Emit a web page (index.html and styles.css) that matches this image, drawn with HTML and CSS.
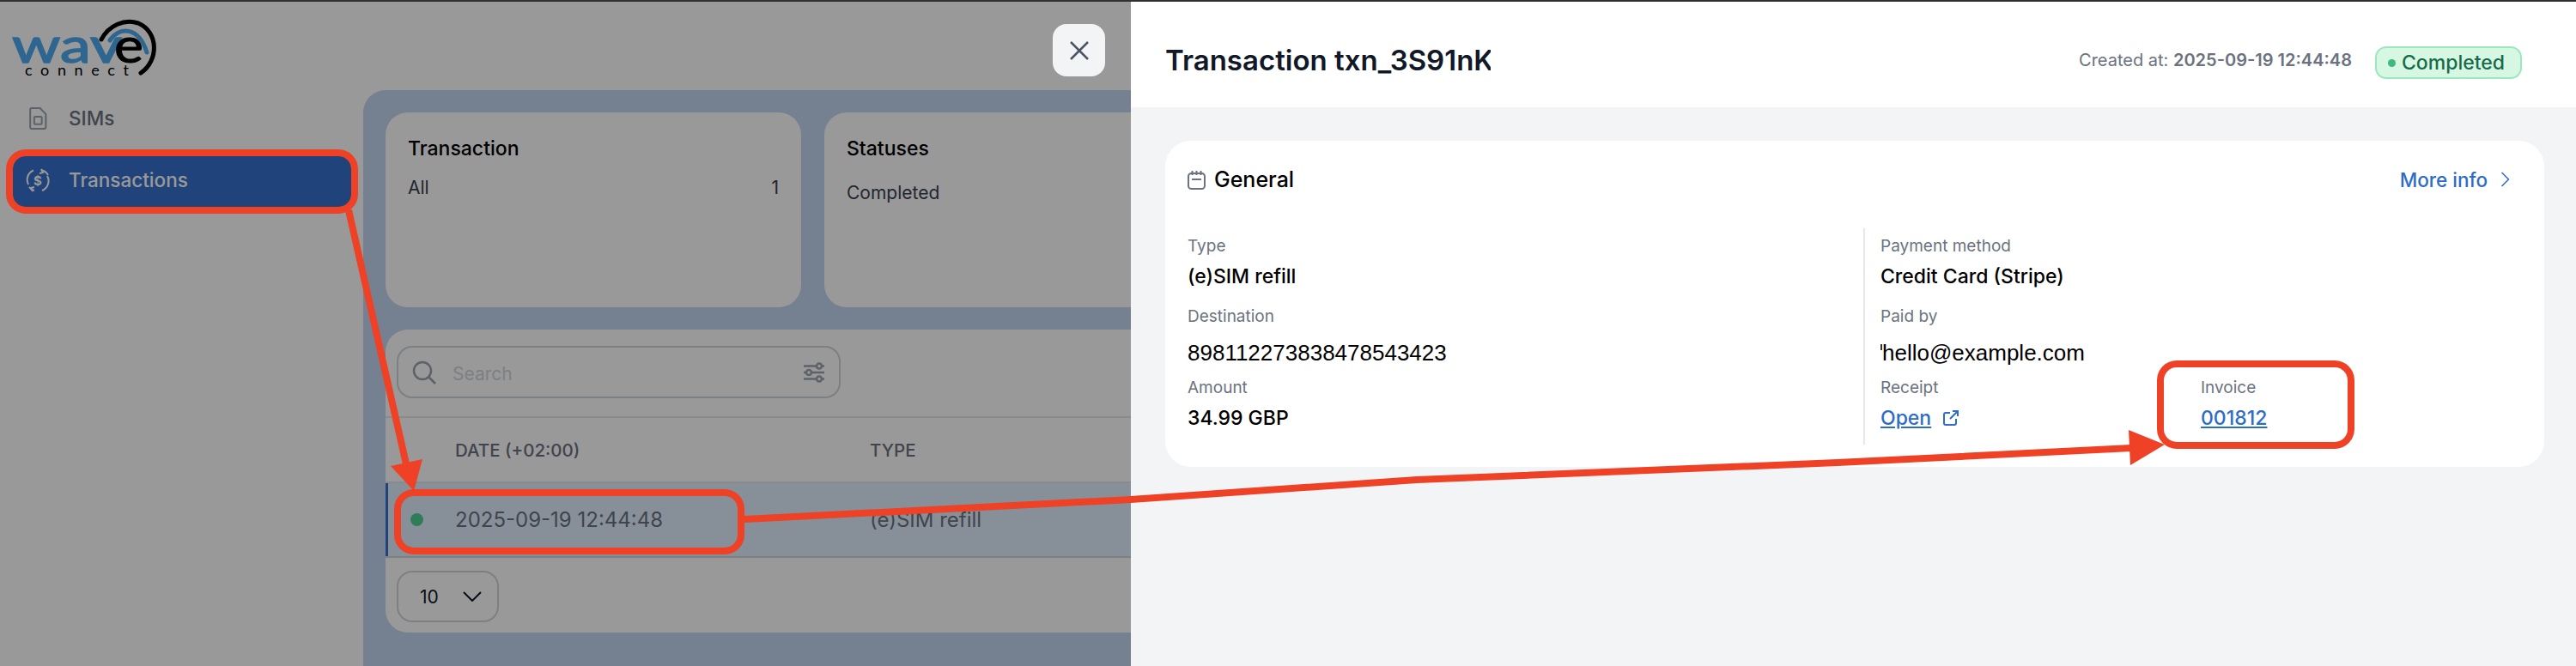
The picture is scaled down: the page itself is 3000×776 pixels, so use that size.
FILE: index.html
```html
<!DOCTYPE html>
<html lang="en">
<head>
    <meta charset="UTF-8">
    <meta name="viewport" content="width=device-width, initial-scale=1.0">
    <title>Transactions</title>
    <link rel="stylesheet" href="styles.css">
</head>
<body>
    <div class="topline"></div>

    <div class="app">
        <aside class="sidebar">
            <svg class="logo" viewBox="0 0 170 68" width="170" height="68">
                <text class="logo-wave" x="-1" y="50" textLength="128" lengthAdjust="spacingAndGlyphs">wav</text>
                <text class="logo-e" x="118" y="50" textLength="34" lengthAdjust="spacingAndGlyphs">e</text>
                <path class="logo-arc-blue" d="M113 24 C124 8 146 7 156 38"/>
                <path class="logo-arc-black" d="M103 23 C112 6 130 -1 146 4 C170 14 170 48 149 62"/>
                <text class="logo-connect" x="14" y="65" textLength="121">connect</text>
            </svg>

            <nav class="nav">
                <a class="nav-item">
                    <svg class="nav-icon" viewBox="0 0 27 27">
                        <path d="M5 3.500a1.500 1.500 0 0 1 1.500-1.500h9.500l6.500 6.500v15a1.500 1.500 0 0 1-1.500 1.500h-14.500a1.500 1.500 0 0 1-1.500-1.500z"/>
                        <rect x="9.500" y="11.500" width="8.500" height="8.500" rx="1"/>
                    </svg>
                    SIMs
                </a>
                <a class="nav-item active">
                    <svg class="nav-icon" viewBox="0 0 28 28">
                        <path d="M3 19a12 12 0 0 1 6-16.500"/>
                        <path d="M18 2a12 12 0 0 1 8 6"/>
                        <path d="M25 9a12 12 0 0 1-6 17"/>
                        <path d="M10 26a12 12 0 0 1-6-4"/>
                        <path d="M18 1l2 4-4 1M8 27l-2-4 4-1"/>
                        <text class="nav-icon-dollar" x="14" y="19.500">$</text>
                    </svg>
                    Transactions
                </a>
            </nav>
        </aside>

        <main class="main">
            <section class="stats">
                <div class="stat-card">
                    <h3>Transaction</h3>
                    <div class="stat-row"><span>All</span><span>1</span></div>
                </div>
                <div class="stat-card">
                    <h3>Statuses</h3>
                    <div class="stat-row stat-row-low"><span>Completed</span></div>
                </div>
            </section>

            <section class="table-card">
                <div class="toolbar">
                    <div class="search">
                        <svg class="search-icon" viewBox="0 0 28 28">
                            <circle cx="12" cy="12" r="10"/>
                            <path d="M19.500 19.500l7.500 7.500"/>
                        </svg>
                        <span class="search-text">Search</span>
                        <svg class="filter-icon" viewBox="0 0 26 24">
                            <path d="M1 4.500h15M22 4.500h3M1 12h3M10 12h15M1 19.500h15M22 19.500h3"/>
                            <circle cx="19" cy="4.500" r="3"/>
                            <circle cx="7" cy="12" r="3"/>
                            <circle cx="19" cy="19.500" r="3"/>
                        </svg>
                    </div>
                </div>

                <div class="table-row table-head">
                    <span></span>
                    <span>Date (+02:00)</span>
                    <span>Type</span>
                </div>
                <div class="table-row table-item">
                    <span class="dot"></span>
                    <span>2025-09-19 12:44:48</span>
                    <span>(e)SIM refill</span>
                </div>

                <div class="table-foot">
                    <div class="page-size">
                        10
                        <svg class="page-size-icon" viewBox="0 0 22 12">
                            <path d="M1 1l10 10 10-10"/>
                        </svg>
                    </div>
                </div>
            </section>
        </main>

        <div class="scrim"></div>

        <button class="close-btn">
            <svg viewBox="0 0 22 22">
                <path d="M1 1l20 20M21 1l-20 20"/>
            </svg>
        </button>

        <section class="drawer">
            <header class="drawer-head">
                <h1 class="drawer-title">Transaction txn_3S91nK6xTq2mPz8Lw4Ab</h1>
                <div class="created">Created at: <b>2025-09-19 12:44:48</b></div>
                <div class="badge"><span class="badge-dot"></span>Completed</div>
            </header>

            <div class="drawer-body">
                <div class="detail-card">
                    <div class="detail-head">
                        <h2>
                            <svg class="calendar-icon" viewBox="0 0 21 23">
                                <rect x="1" y="4" width="19" height="18" rx="3.500"/>
                                <path d="M5.500 1v5M10.500 1v5M15.500 1v5M5 11h11"/>
                            </svg>
                            General
                        </h2>
                        <a class="more-link">
                            More info
                            <svg viewBox="0 0 11 18"><path d="M1.500 1l8 8-8 8"/></svg>
                        </a>
                    </div>

                    <div class="detail-grid">
                        <div class="fields">
                            <div class="field">
                                <span class="field-label">Type</span>
                                <span class="field-value">(e)SIM refill</span>
                            </div>
                            <div class="field field-loose">
                                <span class="field-label">Destination</span>
                                <span class="field-plain">898112273838478543423</span>
                            </div>
                            <div class="field">
                                <span class="field-label">Amount</span>
                                <span class="field-value">34.99 GBP</span>
                            </div>
                        </div>
                        <div class="fields fields-right">
                            <div class="field">
                                <span class="field-label">Payment method</span>
                                <span class="field-value">Credit Card (Stripe)</span>
                            </div>
                            <div class="field field-loose">
                                <span class="field-label">Paid by</span>
                                <span class="field-plain field-email">hello@example.com</span>
                            </div>
                            <div class="field-pair">
                                <div class="field field-receipt">
                                    <span class="field-label">Receipt</span>
                                    <span class="field-value">
                                        <a class="link">Open</a>
                                        <svg class="external-icon" viewBox="0 0 18 18">
                                            <path d="M8 3h-5a2 2 0 0 0-2 2v10a2 2 0 0 0 2 2h10a2 2 0 0 0 2-2v-5"/>
                                            <path d="M8 10l9-9M11 1h6v6"/>
                                        </svg>
                                    </span>
                                </div>
                                <div class="field">
                                    <span class="field-label">Invoice</span>
                                    <span class="field-value"><a class="link">001812</a></span>
                                </div>
                            </div>
                        </div>
                    </div>
                </div>
            </div>
        </section>

        <!-- annotations drawn on top of the screenshot -->
        <svg class="notes" viewBox="0 0 3000 776" width="3000" height="776">
            <rect x="11" y="178" width="402" height="67" rx="19"/>
            <rect x="463" y="574" width="400" height="68" rx="19"/>
            <rect x="2516" y="424" width="222" height="95" rx="19"/>
            <path d="M406 245L474 545"/>
            <path d="M867 605L1317 582L1650 559L2140 539L2482 522"/>
            <polygon class="notes-head" points="455,543 492,535 482,572"/>
            <polygon class="notes-head" points="2479,501 2521,518 2481,542"/>
        </svg>
    </div>
</body>
</html>
```

FILE: styles.css
```css
* {
    box-sizing: border-box;
    margin: 0;
    padding: 0;
}

body {
    font-family: 'Inter', 'Noto Sans', sans-serif;
    background-color: white;
    color: #111827;
    height: 776px;
    overflow: hidden;
}

.topline {
    height: 2px;
    background-color: #2f2f36;
}

.app {
    position: relative;
    display: flex;
    height: 774px;
}

/* sidebar */
.sidebar {
    flex: 0 0 423px;
    padding: 21px 14px 0 15px;
}

.logo {
    display: block;
    width: 170px;
    height: 68px;
    overflow: visible;
}

.logo-wave {
    font-family: 'Lato', sans-serif;
    font-size: 57px;
    font-weight: 400;
    fill: #4daaf0;
    stroke: #4daaf0;
    stroke-width: 1.500;
}

.logo-e {
    font-family: 'Lato', sans-serif;
    font-size: 57px;
    font-weight: 400;
    fill: black;
    stroke: black;
    stroke-width: 1;
}

.logo-arc-blue,
.logo-arc-black {
    fill: none;
    stroke-width: 5;
    stroke-linecap: round;
}

.logo-arc-blue {
    stroke: #4daaf0;
}

.logo-arc-black {
    stroke: black;
}

.logo-connect {
    font-family: 'Lato', sans-serif;
    font-size: 18px;
    font-weight: 400;
    fill: black;
}

.nav {
    margin-top: 19px;
    display: flex;
    flex-direction: column;
    gap: 13px;
}

.nav-item {
    display: flex;
    align-items: center;
    gap: 22px;
    height: 59px;
    padding: 0 0 4px 15px;
    border-radius: 13px;
    font-size: 22.500px;
    font-weight: 500;
    color: #6b7280;
}

.nav-item.active {
    background-color: #3570cb;
    color: white;
}

.nav-icon {
    width: 28px;
    height: 28px;
    fill: none;
    stroke: #9ca3af;
    stroke-width: 2;
}

.active .nav-icon {
    stroke: white;
}

.nav-icon-dollar {
    font-size: 15px;
    font-weight: 700;
    text-anchor: middle;
    fill: white;
    stroke: none;
}

/* page behind the drawer */
.main {
    flex: 1;
    margin-top: 103px;
    padding: 26px;
    background-color: #c3d7f0;
    border-top-left-radius: 26px;
}

.stats {
    display: grid;
    grid-template-columns: 484px 484px;
    gap: 27px;
}

.stat-card {
    height: 227px;
    padding: 26px;
    background: white;
    border-radius: 26px;
}

.stat-card h3 {
    font-size: 23px;
    line-height: 32px;
    font-weight: 500;
    color: black;
}

.stat-row {
    display: flex;
    justify-content: space-between;
    margin-top: 15px;
    font-size: 21px;
    line-height: 30px;
    color: #374151;
}

.stat-row-low {
    margin-top: 21px;
}

.table-card {
    height: 353px;
    margin-top: 26px;
    background: white;
    border-radius: 26px;
}

.toolbar {
    padding: 19px 13px 21px;
    border-bottom: 2px solid #e5e7eb;
}

.search {
    display: flex;
    align-items: center;
    width: 517px;
    height: 61px;
    padding: 0 16px;
    border: 2px solid #d1d5db;
    border-radius: 18px;
}

.search-icon,
.filter-icon {
    flex: none;
    fill: none;
    stroke: #9ca3af;
    stroke-width: 2.500;
}

.search-icon {
    width: 28px;
    height: 28px;
}

.search-text {
    flex: 1;
    margin: 3px 0 0 19px;
    font-size: 21px;
    color: #d1d5db;
}

.filter-icon {
    width: 26px;
    height: 24px;
}

.table-row {
    display: grid;
    grid-template-columns: 81px 483px 1fr;
    align-items: center;
}

.table-head {
    height: 76px;
    border-bottom: 2px solid #e5e7eb;
    font-size: 20.500px;
    font-weight: 500;
    text-transform: uppercase;
    color: #6b7280;
}

.table-item {
    height: 87px;
    background-color: #e1f0ff;
    border-bottom: 2px solid #d1d5db;
    box-shadow: inset 3px 0 0 #3570cb;
    font-size: 24px;
    color: #6b7280;
}

.dot {
    justify-self: start;
    width: 15px;
    height: 15px;
    margin-left: 29px;
    border-radius: 50%;
    background-color: #4ed093;
}

.table-foot {
    padding: 15px 13px;
}

.page-size {
    display: flex;
    align-items: center;
    justify-content: space-between;
    width: 119px;
    height: 60px;
    padding: 0 18px 0 25px;
    border: 2px solid #d1d5db;
    border-radius: 18px;
    font-size: 21px;
    color: #111827;
}

.page-size-icon {
    width: 22px;
    height: 12px;
    fill: none;
    stroke: #111827;
    stroke-width: 2;
}

.scrim {
    position: absolute;
    inset: 0;
    background: rgba(0, 0, 0, 0.4);
}

.close-btn {
    position: absolute;
    top: 26px;
    left: 1226px;
    display: flex;
    align-items: center;
    justify-content: center;
    width: 61px;
    height: 61px;
    background-color: #f3f4f6;
    border: none;
    border-radius: 16px;
}

.close-btn svg {
    width: 22px;
    height: 22px;
    fill: none;
    stroke: #4b5563;
    stroke-width: 2.500;
}

/* drawer */
.drawer {
    position: absolute;
    top: 0;
    bottom: 0;
    left: 1317px;
    right: 0;
    background-color: #f3f4f6;
}

.drawer-head {
    display: flex;
    align-items: center;
    height: 123px;
    padding: 13px 63px 0 40px;
    background: white;
}

.drawer-title {
    width: 379px;
    overflow: hidden;
    white-space: nowrap;
    font-size: 33px;
    font-weight: 600;
}

.created {
    margin-left: auto;
    font-size: 20px;
    color: #6b7280;
}

.created b {
    font-weight: 600;
}

.badge {
    display: flex;
    align-items: center;
    gap: 7px;
    width: 171px;
    height: 38px;
    margin: 6px 0 0 27px;
    padding-left: 13px;
    background-color: #d6f7e1;
    border: 2px solid #9be8c0;
    border-radius: 13px;
    font-size: 23px;
    font-weight: 500;
    color: #166b4c;
}

.badge-dot {
    width: 9px;
    height: 9px;
    border-radius: 50%;
    background-color: #3fb97c;
}

.drawer-body {
    padding: 39px 37px 0 40px;
}

.detail-card {
    height: 380px;
    padding: 29px 40px 0 26px;
    background: white;
    border-radius: 30px;
}

.detail-head {
    display: flex;
    align-items: center;
    justify-content: space-between;
    height: 32px;
}

.detail-head h2 {
    display: flex;
    align-items: center;
    gap: 10px;
    font-size: 25px;
    font-weight: 500;
    color: black;
}

.calendar-icon {
    width: 21px;
    height: 23px;
    fill: none;
    stroke: #6b7280;
    stroke-width: 2;
}

.more-link {
    display: flex;
    align-items: center;
    gap: 15px;
    font-size: 22.500px;
    font-weight: 500;
    color: #2d6cc8;
}

.more-link svg {
    width: 11px;
    height: 18px;
    fill: none;
    stroke: #2d6cc8;
    stroke-width: 1.500;
}

.detail-grid {
    display: grid;
    grid-template-columns: 787px 1fr;
    margin-top: 41px;
    height: 252px;
}

.fields {
    padding-top: 8px;
}

.fields-right {
    padding-left: 18px;
    border-left: 2px solid #e5e7eb;
}

.field {
    display: flex;
    flex-direction: column;
    gap: 8px;
}

.field + .field {
    margin-top: 20px;
}

.field-pair {
    display: flex;
    margin-top: 13px;
}

.field-pair .field {
    margin-top: 0;
}

.field-loose {
    gap: 14px;
}

.field-loose + .field,
.field-loose + .field-pair {
    margin-top: 13px;
}

.field-receipt {
    width: 373px;
}

.field-label {
    font-size: 19px;
    line-height: 26px;
    color: #6b7280;
}

.field-value {
    display: flex;
    align-items: center;
    gap: 14px;
    font-size: 23px;
    line-height: 28px;
    font-weight: 500;
    color: black;
}

.field-plain {
    font-family: 'Liberation Sans', sans-serif;
    font-size: 26px;
    line-height: 30px;
    color: black;
}

.field-email::before {
    content: "";
    display: inline-block;
    width: 2px;
    height: 7px;
    vertical-align: 12px;
    background-color: #333;
}

.link {
    color: #2d6cc8;
    text-decoration: underline;
}

.external-icon {
    width: 18px;
    height: 18px;
    fill: none;
    stroke: #2d6cc8;
    stroke-width: 2;
}

.notes {
    position: absolute;
    top: -2px;
    left: 0;
    fill: none;
    stroke: #ee4126;
    stroke-width: 8;
    pointer-events: none;
}

.notes-head {
    fill: #ee4126;
    stroke: none;
}
```
